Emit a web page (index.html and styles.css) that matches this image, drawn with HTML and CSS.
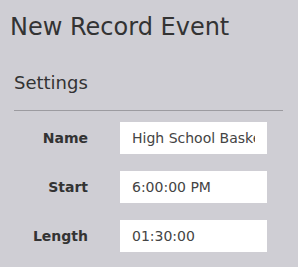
FILE: index.html
```html
<!DOCTYPE html>
<html>
<head>
<meta charset="utf-8">
<link rel="stylesheet" href="styles.css">
</head>
<body>
<div class="page">
  <h1 class="title">New Record Event</h1>
  <section class="section">
    <h2 class="section-title">Settings</h2>
    <div class="form">
      <div class="row">
        <label class="label" for="f-name">Name</label>
        <input class="field" id="f-name" type="text" value="High School Basketball" readonly>
      </div>
      <div class="row">
        <label class="label" for="f-start">Start</label>
        <input class="field" id="f-start" type="text" value="6:00:00 PM" readonly>
      </div>
      <div class="row">
        <label class="label" for="f-length">Length</label>
        <input class="field" id="f-length" type="text" value="01:30:00" readonly>
      </div>
    </div>
  </section>
</div>
</body>
</html>
```

FILE: styles.css
```css
html, body {
  margin: 0;
  padding: 0;
  background: #cfced4;
}
body {
  font-family: "DejaVu Sans", Verdana, sans-serif;
  width: 298px;
  height: 267px;
  overflow: hidden;
}
.page {
  padding: 12px 15px 0 10px;
}
.title {
  margin: 0;
  font-size: 24px;
  font-weight: normal;
  color: #333;
  line-height: 30px;
}
.section {
  padding-left: 4px;
}
.section-title {
  margin: 29px 0 0 0;
  font-size: 18px;
  font-weight: normal;
  color: #333;
  line-height: 24px;
  padding-bottom: 15px;
  border-bottom: 1px solid #9c9ba0;
}
.form {
  display: flex;
  flex-direction: column;
  gap: 17px;
  padding-top: 11px;
}
.row {
  display: flex;
  align-items: center;
}
.label {
  width: 74px;
  text-align: right;
  font-size: 14px;
  font-weight: bold;
  color: #333;
}
.field {
  margin: 0 0 0 32px;
  width: 147px;
  height: 32px;
  box-sizing: border-box;
  background: #fff;
  border: none;
  outline: none;
  padding: 0 12px;
  font-family: "DejaVu Sans", Verdana, sans-serif;
  font-size: 14px;
  color: #444;
}
```
